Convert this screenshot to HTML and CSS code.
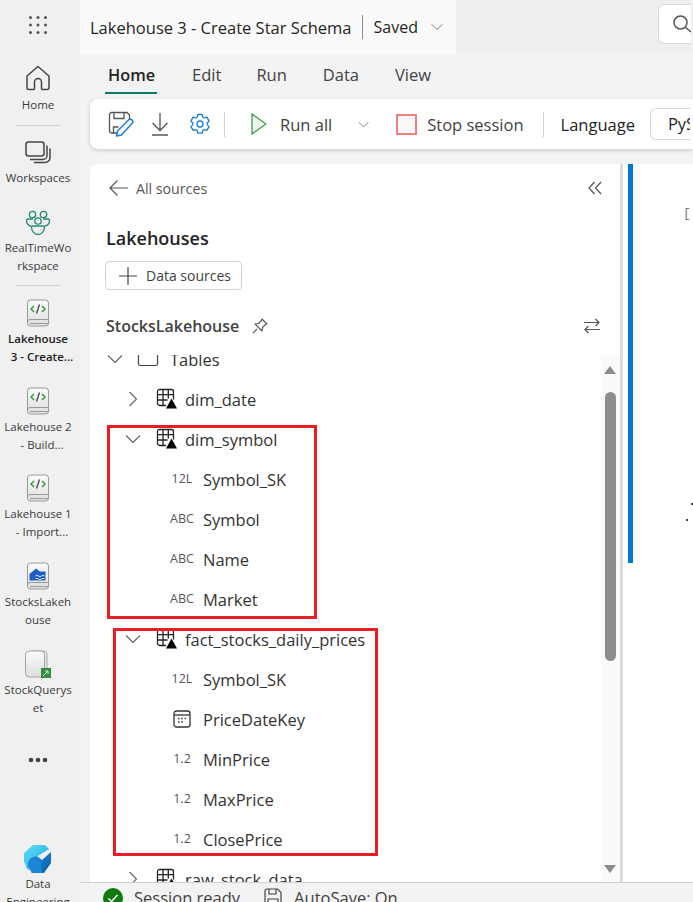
FILE: index.html
```html
<!DOCTYPE html>
<html lang="en">
<head>
    <meta charset="UTF-8">
    <meta name="viewport" content="width=device-width, initial-scale=1.0">
    <title>Lakehouse 3 - Create Star Schema</title>
    <link rel="stylesheet" href="styles.css">
</head>
<body>
    <svg class="defs" width="0" height="0">
        <defs>
            <linearGradient id="bookFill" x1="0" y1="0" x2="0" y2="1">
                <stop offset="0" stop-color="#fbfbfb"/>
                <stop offset="1" stop-color="#dedede"/>
            </linearGradient>
            <linearGradient id="logoLight" x1="0" y1="0" x2="1" y2="1">
                <stop offset="0" stop-color="#5fdcf5"/>
                <stop offset="1" stop-color="#1ea7e6"/>
            </linearGradient>
            <linearGradient id="logoDark" x1="0" y1="0" x2="1" y2="1">
                <stop offset="0" stop-color="#1b93dc"/>
                <stop offset="1" stop-color="#0a5ba8"/>
            </linearGradient>
            <symbol id="book" viewBox="0 0 24 28">
                <path d="M1.500 23V4a3 3 0 0 1 3-3h15a3 3 0 0 1 3 3v20a3 3 0 0 1-3 3h-15a3 3 0 0 1-3-3z" fill="url(#bookFill)" stroke="#9a9a9a"/>
                <path d="M1.500 23a2.500 2.500 0 0 1 2.500-2.500h18.500M4 24.500h18.500" fill="none" stroke="#9a9a9a"/>
            </symbol>
            <symbol id="notebook" viewBox="0 0 24 28">
                <use href="#book" width="24" height="28"/>
                <path d="M8 7 5 10l3 3M16 7l3 3-3 3" fill="none" stroke="#3f9a3f" stroke-width="1.500"/>
                <path d="M13.500 5.500l-3 9" fill="none" stroke="#444" stroke-width="1.300"/>
            </symbol>
            <symbol id="table" viewBox="0 0 22 22">
                <path d="M3.500 1.500h12a2 2 0 0 1 2 2v8M10 17.500H3.500a2 2 0 0 1-2-2v-12a2 2 0 0 1 2-2" fill="none" stroke="#222" stroke-width="1.300"/>
                <path d="M1.500 6.700h16M1.500 12h10M7 1.500v16M12.300 1.500v9" fill="none" stroke="#222" stroke-width="1.300"/>
                <path d="M15.500 10.500 21 20.500H10z" fill="#000"/>
            </symbol>
            <symbol id="chev-down" viewBox="0 0 16 16">
                <path d="M1 4.500l7 7 7-7" fill="none" stroke="#616161" stroke-width="1.100"/>
            </symbol>
            <symbol id="chev-right" viewBox="0 0 16 16">
                <path d="M4.500 1l7 7-7 7" fill="none" stroke="#616161" stroke-width="1.100"/>
            </symbol>
        </defs>
    </svg>

    <nav class="rail">
        <div class="waffle">
            <svg width="20" height="20" viewBox="0 0 20 20" fill="#555"><circle cx="2.500" cy="2.500" r="1.500"/><circle cx="10" cy="2.500" r="1.500"/><circle cx="17.500" cy="2.500" r="1.500"/><circle cx="2.500" cy="10" r="1.500"/><circle cx="10" cy="10" r="1.500"/><circle cx="17.500" cy="10" r="1.500"/><circle cx="2.500" cy="17.500" r="1.500"/><circle cx="10" cy="17.500" r="1.500"/><circle cx="17.500" cy="17.500" r="1.500"/></svg>
        </div>
        <div class="rail-item home">
            <svg width="26" height="26" viewBox="0 0 26 26" fill="none" stroke="#444" stroke-width="1.500"><path d="M2 11 13 1.500 24 11v11.500a2 2 0 0 1-2 2h-4.500a1 1 0 0 1-1-1V17a3.500 3.500 0 0 0-7 0v6.500a1 1 0 0 1-1 1H4a2 2 0 0 1-2-2z" stroke-linejoin="round"/></svg>
            <span class="rail-label">Home</span>
        </div>
        <div class="rail-rule"></div>
        <div class="rail-item spaces">
            <svg width="26" height="24" viewBox="0 0 26 24" fill="none" stroke="#444" stroke-width="1.500"><rect x="1" y="1" width="18" height="14" rx="2.500"/><path d="M22 4.500v10a4 4 0 0 1-4 4H5M25 7.500v9a5 5 0 0 1-5 5H9"/></svg>
            <span class="rail-label">Workspaces</span>
        </div>
        <div class="rail-item group">
            <svg width="26" height="26" viewBox="0 0 26 26" fill="none" stroke="#23896f" stroke-width="1.300"><circle cx="7.500" cy="4.500" r="3.200"/><circle cx="18.500" cy="4.500" r="3.200"/><circle cx="13" cy="11" r="3.200"/><path d="M8 9H3a1.500 1.500 0 0 0-1.500 1.500c0 3 2 5 4.500 5.500M18 9h5a1.500 1.500 0 0 1 1.500 1.500c0 3-2 5-4.500 5.500M7.500 16h11a1 1 0 0 1 1 1c0 4.500-3 7.500-6.500 7.500S6.500 21.500 6.500 17a1 1 0 0 1 1-1z"/></svg>
            <span class="rail-label">RealTimeWo<br>rkspace</span>
        </div>
        <div class="rail-rule"></div>
        <div class="rail-item item">
            <svg width="24" height="28"><use href="#notebook"/></svg>
            <span class="rail-label current"><span class="line">Lakehouse</span><span class="line shift">3 - Create...</span></span>
        </div>
        <div class="rail-item item">
            <svg width="24" height="28"><use href="#notebook"/></svg>
            <span class="rail-label"><span class="line">Lakehouse 2</span><span class="line shift">- Build...</span></span>
        </div>
        <div class="rail-item item">
            <svg width="24" height="28"><use href="#notebook"/></svg>
            <span class="rail-label"><span class="line">Lakehouse 1</span><span class="line shift">- Import...</span></span>
        </div>
        <div class="rail-item item">
            <svg width="24" height="28" viewBox="0 0 24 28">
                <use href="#book" width="24" height="28"/>
                <path d="M3.500 18.500V12L10 6.500 14 9.500h5.500v9z" fill="#1f5fc9"/>
                <path d="M9.500 14q1.500-1.500 3 0t3 0 3 0M9.500 17q1.500-1.500 3 0t3 0 3 0" fill="none" stroke="#d5e6fb" stroke-width="1"/>
            </svg>
            <span class="rail-label">StocksLakeh<br>ouse</span>
        </div>
        <div class="rail-item item">
            <svg width="28" height="28" viewBox="0 0 28 28">
                <path d="M8 1h12a3 3 0 0 1 3 3v20H8z" fill="#e4e4e4" stroke="#ababab"/>
                <rect x="1.500" y="1" width="19" height="26" rx="3.500" fill="url(#bookFill)" stroke="#a5a5a5"/>
                <rect x="17" y="18" width="10" height="10" fill="#2f8f3f"/>
                <path d="M19 26l5-5M21 21h3v3" fill="none" stroke="#d8efd8" stroke-width="1"/>
            </svg>
            <span class="rail-label">StockQuerys<br>et</span>
        </div>
        <div class="rail-more">
            <svg width="20" height="6" viewBox="0 0 20 6" fill="#444"><circle cx="3" cy="3" r="2.300"/><circle cx="10" cy="3" r="2.300"/><circle cx="17" cy="3" r="2.300"/></svg>
        </div>
        <div class="rail-item logo">
            <svg width="30" height="30" viewBox="0 0 30 30">
                <path d="M10 1h12l4 4-11 7-8 14-3-1-3-8V9z" fill="url(#logoLight)"/>
                <path d="M5 21c0-6 5-10 10-8l4 3 9-8v11l-7 10H9z" fill="url(#logoDark)"/>
                <path d="M5 22c1-5 5-8 9-7l5 3c-2 3-1 7 1 11H9z" fill="#1a86d8"/>
            </svg>
            <span class="rail-label">Data<br>Engineering</span>
        </div>
    </nav>

    <div class="main">
        <header class="topbar">
            <div class="title-block">
                <span class="doc-title">Lakehouse 3 - Create Star Schema</span>
                <span class="title-sep"></span>
                <span class="doc-state">Saved</span>
                <svg class="state-chev" width="12" height="12"><use href="#chev-down"/></svg>
            </div>
            <div class="search">
                <svg width="18" height="18" viewBox="0 0 18 18" fill="none" stroke="#555" stroke-width="1.500"><circle cx="7.500" cy="7.500" r="6.500"/><path d="M12 12l6 5"/></svg>
            </div>
        </header>

        <div class="tabs">
            <span class="tab active">Home</span>
            <span class="tab edit">Edit</span>
            <span class="tab run">Run</span>
            <span class="tab data">Data</span>
            <span class="tab view">View</span>
        </div>

        <div class="toolbar">
            <svg class="tool-save" width="26" height="26" viewBox="0 0 26 26" fill="none">
                <path d="M11 22H3.500A2 2 0 0 1 1.500 20V3.500a2 2 0 0 1 2-2H19l2.500 2.500v4" stroke="#555" stroke-width="1.300"/>
                <path d="M6 1.500v6h10v-6M5.500 22v-6h5" stroke="#555" stroke-width="1.300"/>
                <path d="M8.500 25l1-5L20.500 9a2.200 2.200 0 0 1 3.500 3.500L13.500 24z" fill="#fff" stroke="#1b7fd1" stroke-width="1.500" stroke-linejoin="round"/>
            </svg>
            <svg class="tool-down" width="18" height="24" viewBox="0 0 18 24" fill="none" stroke="#555" stroke-width="1.300"><path d="M9 1v17M1.500 11 9 18.500 16.500 11M1 23h16"/></svg>
            <svg class="tool-gear" width="22" height="22" viewBox="0 0 22 22" fill="none" stroke="#1b7fd1" stroke-width="1.300"><circle cx="11" cy="11" r="3"/><path d="M8.800 1.500h4.400l.7 2.800 1.300.7 2.700-.8 2.200 3.800-2 2 .0 1.600 2 2-2.200 3.800-2.700-.8-1.300.7-.7 2.800H8.800l-.7-2.800-1.300-.7-2.700.8-2.200-3.800 2-2V10L1.900 8l2.200-3.800 2.700.8 1.300-.7z" stroke-linejoin="round"/></svg>
            <span class="tool-sep"></span>
            <svg class="tool-play" width="16" height="22" viewBox="0 0 16 22"><path d="M1 1v20l14-10z" fill="#eef6ee" stroke="#3f9a4f" stroke-width="1.300"/></svg>
            <span class="tool-text run-all">Run all</span>
            <svg class="run-chev" width="11" height="11"><use href="#chev-down"/></svg>
            <span class="stop-box"></span>
            <span class="tool-text stop">Stop session</span>
            <span class="tool-sep second"></span>
            <span class="tool-text language">Language</span>
            <span class="lang-select">PySpark</span>
        </div>

        <div class="work">
            <aside class="panel">
                <div class="panel-back">
                    <svg width="21" height="18" viewBox="0 0 21 18" fill="none" stroke="#555" stroke-width="1.200"><path d="M20 9H2M9.500 1.500 2 9l7.500 7.500"/></svg>
                    <span>All sources</span>
                    <svg class="collapse" width="14" height="14" viewBox="0 0 14 14" fill="none" stroke="#555" stroke-width="1.200"><path d="M6.500 1 1 7l5.500 6M13 1 7.500 7l5.500 6"/></svg>
                </div>
                <h2 class="panel-title">Lakehouses</h2>
                <button class="add-btn" type="button">
                    <svg width="18" height="18" viewBox="0 0 18 18" fill="none" stroke="#444" stroke-width="1.200"><path d="M9 0v18M0 9h18"/></svg>
                    Data sources
                </button>
                <div class="lake-head">
                    <span class="lake-name">StocksLakehouse</span>
                    <svg class="pin" width="16" height="16" viewBox="0 0 16 16" fill="none" stroke="#555" stroke-width="1.100"><path d="M10 1l5 5-1.500.5-3 3-.5 3.500-7-7L6.500 5.500l3-3zM5 11l-4 4" stroke-linejoin="round"/></svg>
                    <svg class="swap" width="18" height="16" viewBox="0 0 18 16" fill="none" stroke="#555" stroke-width="1.200"><path d="M1 4.500h15M12.500 1 16 4.500 12.500 8M17 11.500H2M5.500 8 2 11.500 5.500 15"/></svg>
                </div>

                <div class="tree-wrap">
                    <div class="tree">
                        <div class="row level-0">
                            <svg class="caret big" width="16" height="16"><use href="#chev-down"/></svg>
                            <svg class="folder" width="22" height="20" viewBox="0 0 22 20" fill="none" stroke="#444" stroke-width="1.200"><path d="M1.500 3a1 1 0 0 1 1-1h17a1 1 0 0 1 1 1v12a1.500 1.500 0 0 1-1.500 1.500H3A1.500 1.500 0 0 1 1.500 15z"/></svg>
                            <span>Tables</span>
                        </div>
                        <div class="row level-1">
                            <svg class="caret" width="16" height="16"><use href="#chev-right"/></svg>
                            <svg class="table-icon" width="22" height="22"><use href="#table"/></svg>
                            <span>dim_date</span>
                        </div>
                        <div class="row level-1">
                            <svg class="caret" width="16" height="16"><use href="#chev-down"/></svg>
                            <svg class="table-icon" width="22" height="22"><use href="#table"/></svg>
                            <span>dim_symbol</span>
                        </div>
                        <div class="row level-2"><span class="type">12L</span><span>Symbol_SK</span></div>
                        <div class="row level-2"><span class="type">ABC</span><span>Symbol</span></div>
                        <div class="row level-2"><span class="type">ABC</span><span>Name</span></div>
                        <div class="row level-2"><span class="type">ABC</span><span>Market</span></div>
                        <div class="row level-1">
                            <svg class="caret" width="16" height="16"><use href="#chev-down"/></svg>
                            <svg class="table-icon" width="22" height="22"><use href="#table"/></svg>
                            <span>fact_stocks_daily_prices</span>
                        </div>
                        <div class="row level-2"><span class="type">12L</span><span>Symbol_SK</span></div>
                        <div class="row level-2">
                            <span class="type">
                                <svg width="18" height="18" viewBox="0 0 18 18" fill="none" stroke="#333" stroke-width="1.300"><rect x="1" y="1" width="16" height="16" rx="2.500"/><path d="M1 5h16"/><path d="M5 8.500h1.500M8.300 8.500h1.500M11.600 8.500h1.500M5 12h1.500M8.300 12h1.500" stroke-width="1.700"/></svg>
                            </span>
                            <span>PriceDateKey</span>
                        </div>
                        <div class="row level-2"><span class="type">1.2</span><span>MinPrice</span></div>
                        <div class="row level-2"><span class="type">1.2</span><span>MaxPrice</span></div>
                        <div class="row level-2"><span class="type">1.2</span><span>ClosePrice</span></div>
                        <div class="row level-1">
                            <svg class="caret" width="16" height="16"><use href="#chev-right"/></svg>
                            <svg class="table-icon" width="22" height="22"><use href="#table"/></svg>
                            <span>raw_stock_data</span>
                        </div>
                    </div>
                    <div class="mark mark-a"></div>
                    <div class="mark mark-b"></div>
                    <div class="scrollbar">
                        <span class="arrow up"></span>
                        <span class="thumb"></span>
                        <span class="arrow down"></span>
                    </div>
                </div>
            </aside>
            <div class="editor">
                <div class="cell-bar"></div>
                <div class="cell">
                    <span class="bracket">[</span>
                    <span class="cell-dot dot-a"></span>
                    <span class="cell-dot dot-b"></span>
                </div>
            </div>
        </div>

        <footer class="status">
            <svg width="20" height="20" viewBox="0 0 20 20"><circle cx="10" cy="10" r="10" fill="#107c10"/><path d="M5.500 10.500 8.500 13.500 14.500 7" fill="none" stroke="#fff" stroke-width="1.500"/></svg>
            <span class="status-text">Session ready</span>
            <svg class="status-save" width="18" height="18" viewBox="0 0 18 18" fill="none" stroke="#444" stroke-width="1.200"><path d="M1 3a2 2 0 0 1 2-2h10.500L17 4.500V15a2 2 0 0 1-2 2H3a2 2 0 0 1-2-2z"/><path d="M5 1v5h7V1M4 17v-6h10v6"/></svg>
            <span class="status-text autosave">AutoSave: On</span>
        </footer>
    </div>
</body>
</html>
```

FILE: styles.css
```css
:root {
    --rail-color: #f0f0f0;
    --main-color: #f3f3f3;
    --text-color: #242424;
    --rule-color: #d1d1d1;
    --mark-color: #ed1c24;
}

* {
    margin: 0;
    padding: 0;
    box-sizing: border-box;
    font-family: 'Open Sans', 'Liberation Sans', sans-serif;
}

html,
body {
    width: 693px;
    height: 902px;
    overflow: hidden;
}

body {
    display: flex;
    background-color: var(--rail-color);
    color: var(--text-color);
}

.defs {
    position: absolute;
}

/* left rail */
.rail {
    width: 80px;
    height: 902px;
    flex-shrink: 0;
    overflow: hidden;
    display: flex;
    flex-direction: column;
    align-items: center;
    padding-right: 4px;
    background-color: var(--rail-color);
}

.waffle {
    height: 50px;
    flex-shrink: 0;
    padding-top: 15px;
}

.rail-item {
    width: 76px;
    flex-shrink: 0;
    display: flex;
    flex-direction: column;
    align-items: center;
}

.rail-label {
    display: block;
    width: 76px;
    margin-top: 3px;
    font-size: 11.500px;
    line-height: 18px;
    text-align: center;
    color: #3b3b3b;
}

.rail-label .line {
    display: block;
    white-space: nowrap;
}

.rail-label .shift {
    padding-left: 8px;
}

.rail-label.current {
    color: #1b1b1b;
    font-weight: 600;
}

.rail-item.home {
    height: 75px;
    padding-top: 15px;
}

.rail-item.home .rail-label {
    margin-top: 5px;
}

.rail-item.spaces .rail-label {
    margin-top: 4px;
}

.rail-rule {
    width: 45px;
    height: 1px;
    flex-shrink: 0;
    background-color: var(--rule-color);
}

.rail-item.spaces {
    height: 68px;
    padding-top: 15px;
}

.rail-item.group {
    height: 91px;
    padding-top: 16px;
}

.rail-item.item {
    height: 87.700px;
    padding-top: 13px;
}

.rail-more {
    height: 70px;
    flex-shrink: 0;
    padding-top: 33px;
    line-height: 0;
}

.rail-item.logo {
    margin-top: 50px;
}

.rail-item.logo .rail-label {
    margin-top: 1px;
}

/* main column */
.main {
    flex: 1;
    min-width: 0;
    height: 902px;
    display: flex;
    flex-direction: column;
    background-color: var(--main-color);
}

.topbar {
    height: 54px;
    flex-shrink: 0;
    display: flex;
    align-items: flex-start;
    background-color: #efefef;
}

.title-block {
    width: 376px;
    height: 54px;
    flex-shrink: 0;
    display: flex;
    align-items: center;
    padding-left: 10px;
    background-color: #fafafa;
    font-size: 16.500px;
    white-space: nowrap;
}

.title-sep {
    width: 1px;
    height: 24px;
    margin: 0 11px 0 10px;
    background-color: #8a8a8a;
}

.doc-state {
    font-size: 16px;
}

.state-chev {
    margin-left: 13px;
}

.search {
    width: 33px;
    height: 40px;
    margin: 4px 0 0 202px;
    padding: 10px 0 0 14px;
    flex-shrink: 0;
    background-color: #fff;
    border: 1px solid #d8d8d8;
    border-right: none;
    border-radius: 6px 0 0 6px;
    line-height: 0;
}

.tabs {
    height: 45px;
    flex-shrink: 0;
    display: flex;
    align-items: flex-start;
    padding: 9px 0 0 28px;
}

.tab {
    height: 30px;
    font-size: 16.500px;
    line-height: 24px;
    color: #424242;
}

.tab.active {
    color: #242424;
    font-weight: 600;
    border-bottom: 2px solid #117865;
    padding: 0 2px 0 3px;
    height: 31px;
    margin-left: -3px;
    font-size: 16.300px;
}

.tab.edit { margin-left: 35px; }
.tab.run { margin-left: 35px; }
.tab.data { margin-left: 36px; }
.tab.view { margin-left: 36px; }

.toolbar {
    width: 603px;
    height: 50px;
    flex-shrink: 0;
    display: flex;
    align-items: center;
    margin-left: 10px;
    padding-left: 18px;
    background-color: #fff;
    border-radius: 8px 0 0 8px;
    box-shadow: 0 1px 4px rgba(0, 0, 0, 0.18);
}

.tool-down { margin-left: 17px; }
.tool-gear { margin-left: 20px; }

.tool-sep {
    width: 1px;
    height: 25px;
    margin-left: 13px;
    background-color: var(--rule-color);
}

.tool-sep.second { margin-left: 19px; }

.tool-play { margin-left: 26px; }

.tool-text {
    font-size: 16.500px;
    color: #424242;
    white-space: nowrap;
}

.run-all { margin-left: 13px; }

.run-chev { margin-left: 26px; }

.stop-box {
    width: 21px;
    height: 21px;
    margin-left: 27px;
    background-color: #fafafa;
    border: 2px solid #f08080;
}

.stop { margin-left: 10px; }

.language {
    margin-left: 17px;
    color: #242424;
}

.lang-select {
    width: 40px;
    height: 32px;
    margin-left: 15px;
    padding: 3px 0 0 17px;
    flex-shrink: 0;
    overflow: hidden;
    font-size: 16.500px;
    white-space: nowrap;
    background-color: #fff;
    border: 1px solid #d8d8d8;
    border-right: none;
    border-radius: 6px 0 0 6px;
}

.work {
    flex: 1;
    min-height: 0;
    display: flex;
    margin-top: 15px;
}

.panel {
    width: 533px;
    flex-shrink: 0;
    margin-left: 10px;
    display: flex;
    flex-direction: column;
    background-color: #fff;
    border-right: 3px solid #dcdcdc;
    border-radius: 8px 0 0 0;
}

.panel-back {
    display: flex;
    align-items: center;
    height: 24px;
    margin-top: 12px;
    padding-left: 18px;
    font-size: 14.200px;
    color: #555;
}

.panel-back span {
    margin-left: 7px;
}

.collapse {
    margin-left: auto;
    margin-right: 18px;
}

.panel-title {
    margin: 26px 0 0 16px;
    font-size: 18px;
    line-height: 24px;
    font-weight: 600;
    color: #242424;
}

.add-btn {
    width: 137px;
    height: 29px;
    margin: 11px 0 0 15px;
    display: flex;
    align-items: center;
    gap: 9px;
    padding-left: 13px;
    font-size: 14px;
    color: #424242;
    background-color: #fff;
    border: 1px solid #d1d1d1;
    border-radius: 4px;
}

.lake-head {
    display: flex;
    align-items: center;
    height: 24px;
    margin-top: 24px;
    padding-left: 16px;
    font-size: 16px;
    font-weight: 600;
    color: #424242;
}

.pin { margin-left: 13px; }

.swap {
    margin-left: auto;
    margin-right: 19px;
}

.tree-wrap {
    position: relative;
    flex: 1;
    min-height: 0;
    margin-top: 17px;
    overflow: hidden;
}

.tree {
    margin-top: -16px;
}

.row {
    height: 40px;
    display: flex;
    align-items: center;
    font-size: 16.500px;
    color: #333;
    white-space: nowrap;
}

.level-0 { padding-left: 17px; }
.level-1 { padding-left: 35px; }
.level-2 { padding-left: 80px; }

.caret.big { margin-right: 14px; }

.folder { margin-right: 11px; }

.table-icon {
    margin: 0 7px 0 15px;
}

.type {
    width: 24px;
    margin-right: 9px;
    font-size: 12.500px;
    line-height: 18px;
    text-align: center;
    color: #555;
    display: flex;
    justify-content: center;
}

/* red review boxes drawn over the tree */
.mark {
    position: absolute;
    border: 3px solid var(--mark-color);
    pointer-events: none;
}

.mark-a {
    left: 17px;
    top: 70px;
    width: 210px;
    height: 194px;
}

.mark-b {
    left: 23px;
    top: 273px;
    width: 265px;
    height: 228px;
}

.scrollbar {
    position: absolute;
    right: 0;
    top: 0;
    bottom: 0;
    width: 19px;
    background-color: #fafafa;
}

.thumb {
    position: absolute;
    left: 4px;
    top: 37px;
    width: 11px;
    height: 269px;
    border-radius: 6px;
    background-color: #8c8c8c;
}

.arrow {
    position: absolute;
    left: 3px;
    border-left: 6px solid transparent;
    border-right: 6px solid transparent;
}

.arrow.up {
    top: 11px;
    border-bottom: 8px solid #8c8c8c;
}

.arrow.down {
    bottom: 9px;
    border-top: 8px solid #8c8c8c;
}

.editor {
    flex: 1;
    min-width: 0;
    display: flex;
    background-color: #fff;
}

.cell-bar {
    width: 5px;
    height: 399px;
    margin-left: 5px;
    flex-shrink: 0;
    background-color: #0078d4;
}

.cell {
    position: relative;
    flex: 1;
    padding: 36px 0 0 50px;
}

.bracket {
    font-family: 'Liberation Mono', monospace;
    font-size: 13px;
    color: #777;
}

.cell-dot {
    position: absolute;
    width: 2px;
    height: 2px;
    background-color: #444;
}

.dot-a {
    left: 58px;
    top: 339px;
}

.dot-b {
    left: 53px;
    top: 355px;
}

.status {
    height: 20px;
    flex-shrink: 0;
    display: flex;
    align-items: flex-start;
    padding: 5px 0 0 23px;
    border-top: 1px solid #d1d1d1;
    overflow: hidden;
    background-color: var(--main-color);
}

.status-text {
    margin-left: 11px;
    font-size: 16.500px;
    line-height: 20px;
    color: #424242;
    white-space: nowrap;
}

.status-save {
    margin-left: 24px;
}

.status-text.autosave {
    margin-left: 12px;
}
```
